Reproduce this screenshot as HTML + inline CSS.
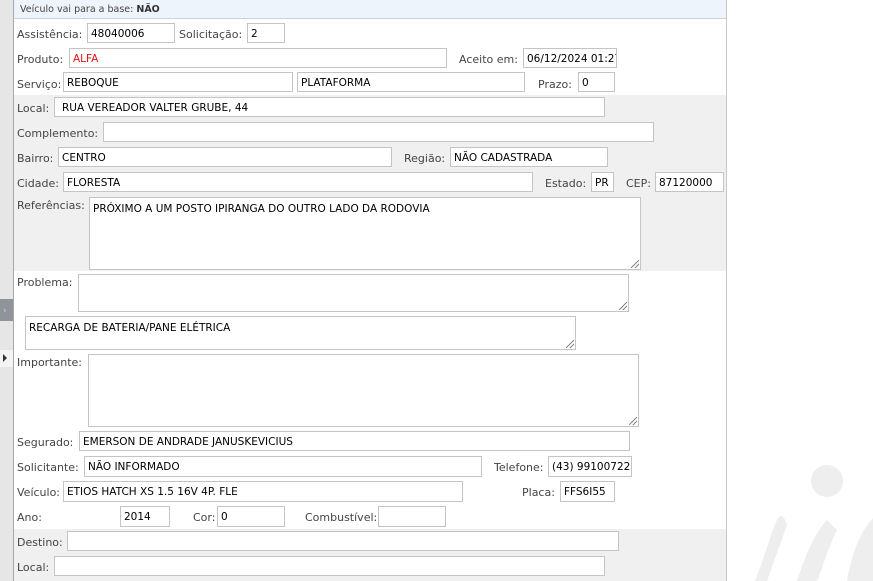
<!DOCTYPE html>
<html><head><meta charset="utf-8"><style>
*{margin:0;padding:0;box-sizing:border-box}
body{width:873px;height:581px;overflow:hidden;background:#fff;position:relative;font-family:Tahoma,"DejaVu Sans","Liberation Sans",sans-serif;font-size:11px;color:#333}
.a{position:absolute}
.l{position:absolute;color:#444;font-size:11px;line-height:13px;white-space:nowrap;margin-top:1px}
.i{position:absolute;border:1px solid #c4c4c4;background:#fff;color:#000;font-size:10.5px;padding:4px 3px 0;line-height:13px;white-space:nowrap;overflow:hidden}
.t{padding-top:5px}
.rz::after{content:"";position:absolute;right:1px;bottom:1px;width:8px;height:8px;background:linear-gradient(135deg,transparent 45%,#888 45%,#888 55%,transparent 55%,transparent 70%,#888 70%,#888 80%,transparent 80%)}
</style></head><body>
<div class="a" style="left:0;top:0;width:13px;height:581px;background:#e6e6e6"></div>
<div class="a" style="left:13px;top:0;width:1px;height:581px;background:#a8a8a8"></div>
<div class="a" style="left:0;top:299px;width:13px;height:22px;background:#8e949a"></div>
<div class="a" style="left:3px;top:306px;color:#cfd3d6;font-size:9px">›</div>
<div class="a" style="left:0;top:350px;width:13px;height:17px;background:#f4f4f4"></div>
<div class="a" style="left:3px;top:354px;width:0;height:0;border-left:4px solid #333;border-top:4px solid transparent;border-bottom:4px solid transparent"></div>
<div class="a" style="left:726px;top:0;width:1px;height:581px;background:#c8c8c8"></div>
<div class="a" style="left:14px;top:0;width:712px;height:19px;background:#eef4fb;border-bottom:1px solid #c9d3de"></div>
<div class="l" style="left:20px;top:2px;font-size:9.5px">Veículo vai para a base: <b style="color:#333">NÃO</b></div>
<div class="a" style="left:14px;top:95px;width:712px;height:176px;background:#f0f0f0"></div>
<div class="a" style="left:14px;top:529px;width:712px;height:52px;background:#f0f0f0"></div>
<svg class="a" style="left:727px;top:380px" width="146" height="201"><circle cx="100" cy="101" r="16" fill="#eeeeee"/><path d="M28 201 C40 170 45 150 50 140 Q55 130 60 145 L40 201Z" fill="#eeeeee"/><path d="M70 201 C80 170 90 150 100 140 L110 150 C100 170 95 190 90 201Z" fill="#eeeeee"/><path d="M120 201 C125 170 135 150 146 138 L146 201Z" fill="#eeeeee"/></svg>

<div class="l" style="left:17px;top:27px">Assistência:</div><div class="i" style="left:87px;top:23px;width:88px;height:20px">48040006</div>
<div class="l" style="left:179px;top:27px">Solicitação:</div><div class="i" style="left:247px;top:23px;width:38px;height:20px">2</div>
<div class="l" style="left:17px;top:52px">Produto:</div><div class="i" style="left:69px;top:48px;width:378px;height:20px;color:#e01010">ALFA</div>
<div class="l" style="left:459px;top:52px">Aceito em:</div><div class="i" style="left:523px;top:48px;width:94px;height:20px">06/12/2024 01:27</div>
<div class="l" style="left:17px;top:77px">Serviço:</div><div class="i" style="left:63px;top:72px;width:230px;height:20px">REBOQUE</div>
<div class="i" style="left:297px;top:72px;width:228px;height:20px">PLATAFORMA</div>
<div class="l" style="left:538px;top:77px">Prazo:</div><div class="i" style="left:578px;top:72px;width:37px;height:20px">0</div>
<div class="l" style="left:17px;top:101px">Local:</div><div class="i" style="left:54px;top:97px;width:551px;height:20px;padding-left:7px">RUA VEREADOR VALTER GRUBE, 44</div>
<div class="l" style="left:17px;top:126px">Complemento:</div><div class="i" style="left:103px;top:122px;width:551px;height:20px"></div>
<div class="l" style="left:17px;top:151px">Bairro:</div><div class="i" style="left:58px;top:147px;width:334px;height:20px">CENTRO</div>
<div class="l" style="left:404px;top:151px">Região:</div><div class="i" style="left:450px;top:147px;width:158px;height:20px">NÃO CADASTRADA</div>
<div class="l" style="left:17px;top:176px">Cidade:</div><div class="i" style="left:63px;top:172px;width:470px;height:20px">FLORESTA</div>
<div class="l" style="left:545px;top:176px">Estado:</div><div class="i" style="left:591px;top:172px;width:23px;height:20px">PR</div>
<div class="l" style="left:626px;top:176px">CEP:</div><div class="i" style="left:655px;top:172px;width:69px;height:20px">87120000</div>
<div class="l" style="left:17px;top:198px">Referências:</div><div class="i t rz" style="left:89px;top:197px;width:552px;height:73px">PRÓXIMO A UM POSTO IPIRANGA DO OUTRO LADO DA RODOVIA</div>
<div class="l" style="left:17px;top:275px">Problema:</div><div class="i rz" style="left:78px;top:274px;width:551px;height:38px"></div>
<div class="i t rz" style="left:25px;top:316px;width:551px;height:34px">RECARGA DE BATERIA/PANE ELÉTRICA</div>
<div class="l" style="left:17px;top:355px">Importante:</div><div class="i rz" style="left:88px;top:354px;width:551px;height:73px"></div>
<div class="l" style="left:17px;top:435px">Segurado:</div><div class="i" style="left:79px;top:431px;width:551px;height:20px">EMERSON DE ANDRADE JANUSKEVICIUS</div>
<div class="l" style="left:17px;top:460px">Solicitante:</div><div class="i" style="left:84px;top:456px;width:398px;height:21px">NÃO INFORMADO</div>
<div class="l" style="left:494px;top:460px">Telefone:</div><div class="i" style="left:548px;top:456px;width:84px;height:21px">(43) 991007228</div>
<div class="l" style="left:17px;top:485px">Veículo:</div><div class="i" style="left:63px;top:481px;width:400px;height:21px">ETIOS HATCH XS 1.5 16V 4P. FLE</div>
<div class="l" style="left:522px;top:485px">Placa:</div><div class="i" style="left:560px;top:481px;width:55px;height:21px">FFS6I55</div>
<div class="l" style="left:17px;top:510px">Ano:</div><div class="i" style="left:120px;top:506px;width:50px;height:21px">2014</div>
<div class="l" style="left:193px;top:510px">Cor:</div><div class="i" style="left:217px;top:506px;width:68px;height:21px">0</div>
<div class="l" style="left:305px;top:510px">Combustível:</div><div class="i" style="left:378px;top:506px;width:68px;height:21px"></div>
<div class="l" style="left:17px;top:535px">Destino:</div><div class="i" style="left:67px;top:531px;width:552px;height:20px"></div>
<div class="l" style="left:17px;top:560px">Local:</div><div class="i" style="left:54px;top:556px;width:551px;height:20px"></div>
</body></html>
